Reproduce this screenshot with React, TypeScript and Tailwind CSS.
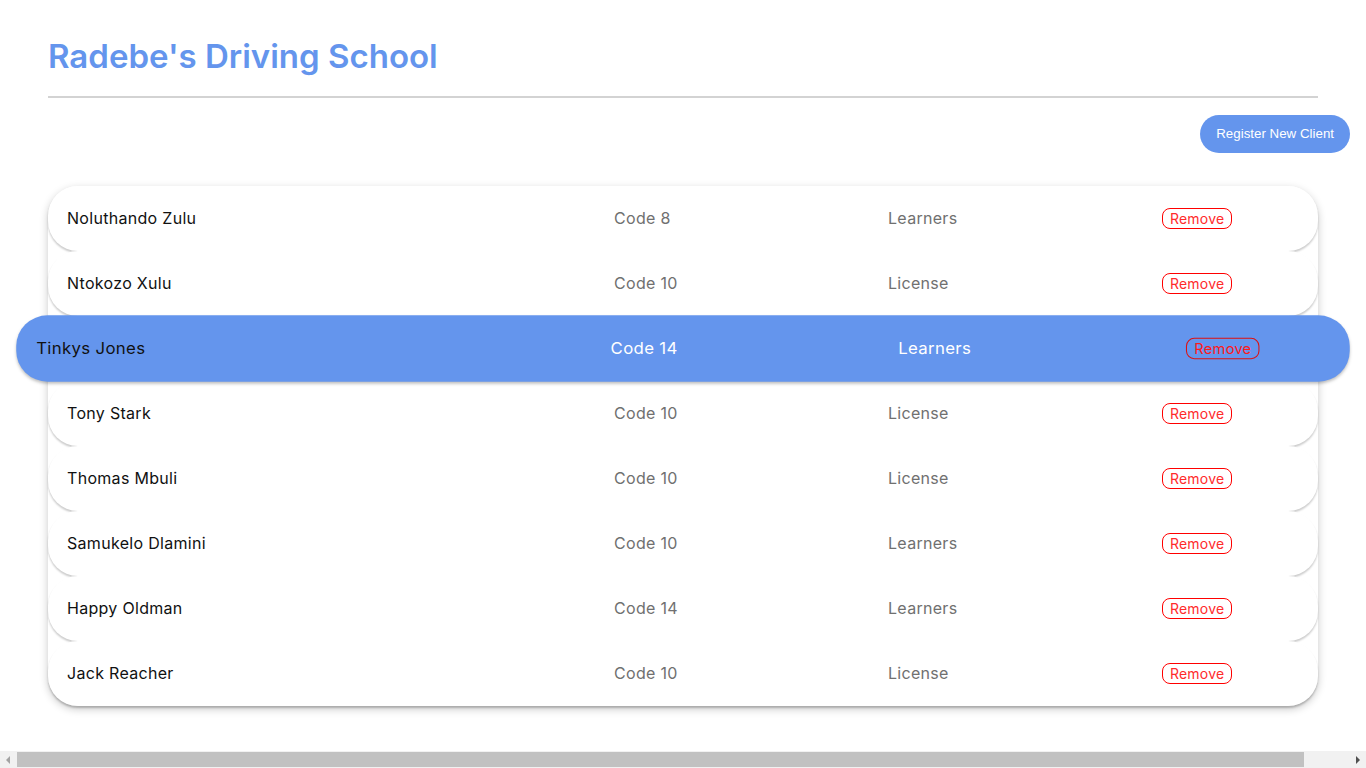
const clients = [
  { name: 'Noluthando Zulu', code: 'Code 8', status: 'Learners' },
  { name: 'Ntokozo Xulu', code: 'Code 10', status: 'License' },
  { name: 'Tinkys Jones', code: 'Code 14', status: 'Learners', active: true },
  { name: 'Tony Stark', code: 'Code 10', status: 'License' },
  { name: 'Thomas Mbuli', code: 'Code 10', status: 'License' },
  { name: 'Samukelo Dlamini', code: 'Code 10', status: 'Learners' },
  { name: 'Happy Oldman', code: 'Code 14', status: 'Learners' },
  { name: 'Jack Reacher', code: 'Code 10', status: 'License' },
];

export default function App() {
  return (
    <div className="w-[1366px] h-[768px] overflow-hidden bg-white font-['Inter','Noto_Sans',sans-serif]">
      <div className="ml-12 w-[1270px] pt-9">
        <h1 className="text-[33px] leading-[40px] font-semibold text-[#6495ed]">
          Radebe's Driving School
        </h1>
        <hr className="mt-5 border-0 h-[2px] bg-[#d3d3d3]" />

        <div className="flex justify-end mt-[17px] -mr-8">
          <button className="h-[38px] px-4 rounded-full bg-[#6495ed] text-white text-[13.33px] font-['Liberation_Sans',Arial,sans-serif]">
            Register New Client
          </button>
        </div>

        <div className="mt-[33px] rounded-[30px] bg-white shadow-[0_3px_8px_rgba(0,0,0,0.22)] tracking-[0.3px]">
          {clients.map((c) =>
            c.active ? (
              <div
                key={c.name}
                className="relative z-10 h-[65px] pb-[2px] grid grid-cols-[547px_274px_274px_1fr] items-center pl-[19px] rounded-[30px] bg-[#6495ed] shadow-[0_2px_3px_rgba(0,0,0,0.25)] scale-x-[1.05] scale-y-[1.02] text-[16px]"
              >
                <span className="text-[#111]">{c.name}</span>
                <span className="text-white">{c.code}</span>
                <span className="text-white">{c.status}</span>
                <span>
                  <button className="px-[7px] h-[21px] leading-[19px] text-[14px] tracking-[0.2px] text-[#ff1a1a] border border-[#d11] rounded-[8px]">
                    Remove
                  </button>
                </span>
              </div>
            ) : (
              <div
                key={c.name}
                className="h-[65px] pb-[2px] grid grid-cols-[547px_274px_274px_1fr] items-center pl-[19px] rounded-[30px] bg-white shadow-[0_2px_2px_rgba(0,0,0,0.2)] text-[16px]"
              >
                <span className="text-[#111]">{c.name}</span>
                <span className="text-[#707070]">{c.code}</span>
                <span className="text-[#707070]">{c.status}</span>
                <span>
                  <button className="px-[7px] h-[21px] leading-[19px] text-[14px] tracking-[0.2px] text-[#ff2b2b] border border-[#ff0000] rounded-[8px]">
                    Remove
                  </button>
                </span>
              </div>
            )
          )}
        </div>
      </div>

      {/* horizontal scrollbar */}
      <div className="fixed left-0 bottom-0 w-[1366px] h-[17px] bg-[#f1f1f1] flex items-center">
        <span className="w-[17px] flex justify-center">
          <svg width="5" height="8" viewBox="0 0 5 8"><path d="M4 0L0 4l4 4z" fill="#a3a3a3" /></svg>
        </span>
        <div className="w-[1287px] h-[15px] bg-[#c1c1c1]" />
        <div className="flex-1" />
        <span className="w-[17px] flex justify-center">
          <svg width="5" height="8" viewBox="0 0 5 8"><path d="M1 0l4 4-4 4z" fill="#505050" /></svg>
        </span>
      </div>
    </div>
  );
}
